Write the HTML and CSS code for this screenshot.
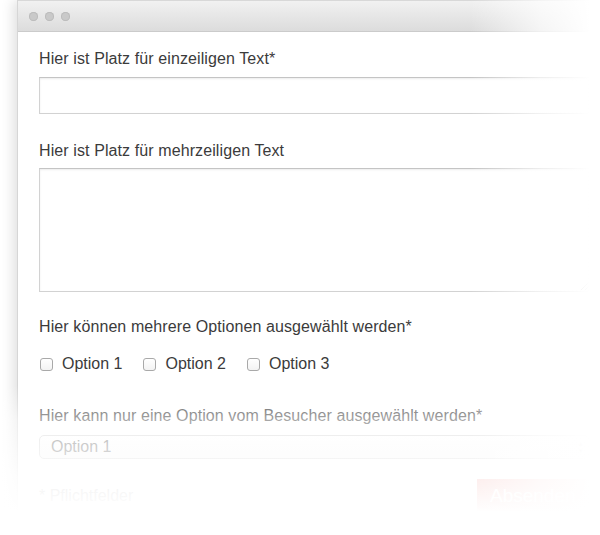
FILE: index.html
```html
<!DOCTYPE html>
<html lang="de">
<head>
<meta charset="utf-8">
<title>Formular</title>
<link rel="stylesheet" href="styles.css">
</head>
<body>
<div class="page">
  <div class="window">
    <div class="titlebar">
      <span class="dot"></span><span class="dot"></span><span class="dot"></span>
    </div>
    <form class="content">
      <label class="label">Hier ist Platz für einzeiligen Text*</label>
      <input class="field" type="text">
      <label class="label gap-lg">Hier ist Platz für mehrzeiligen Text</label>
      <textarea class="area"></textarea>
      <label class="label gap-md">Hier können mehrere Optionen ausgewählt werden*</label>
      <div class="checks">
        <span class="check"><span class="box"></span>Option 1</span>
        <span class="check"><span class="box"></span>Option 2</span>
        <span class="check"><span class="box"></span>Option 3</span>
      </div>
      <label class="label gap-xl">Hier kann nur eine Option vom Besucher ausgewählt werden*</label>
      <div class="select"><span>Option 1</span><span class="arrows">▴<br>▾</span></div>
      <div class="footer">
        <span class="note">* Pflichtfelder</span>
        <span class="button">Absenden</span>
      </div>
    </form>
  </div>
  <div class="fade"></div>
</div>
</body>
</html>
```
FILE: styles.css
```css
html, body {
  margin: 0;
  padding: 0;
  background: #fff;
}
body {
  font-family: "Liberation Sans", Arial, sans-serif;
  color: #3b3b3b;
}
.page {
  position: relative;
  width: 600px;
  height: 535px;
  overflow: hidden;
}
.window {
  margin-left: 17px;
  height: 520px;
  border-left: 1px solid #d6d6d6;
  box-shadow: -4px 0 12px rgba(0,0,0,0.12);
  background: #fff;
}
.titlebar {
  height: 30px;
  border-top: 1px solid #d8d8d8;
  border-bottom: 1px solid #cbcbcb;
  background: linear-gradient(#f1f1f1, #dcdcdc);
  display: flex;
  align-items: center;
  gap: 7px;
  padding-left: 11px;
}
.dot {
  width: 9px;
  height: 9px;
  border-radius: 50%;
  background: #c9c9c9;
  box-shadow: inset 0 0 0 1px #bcbcbc;
}
.content {
  display: flex;
  flex-direction: column;
  padding: 18px 10px 0 21px;
}
.label {
  font-size: 16px;
  line-height: 18px;
  margin-bottom: 9px;
  letter-spacing: 0.1px;
}
.gap-lg { margin-top: 28px; margin-bottom: 8px; }
.gap-md { margin-top: 26px; margin-bottom: 19px; }
.gap-xl { margin-top: 34px; margin-bottom: 10px; }
.field {
  box-sizing: border-box;
  height: 37px;
  margin: 0;
  border: 1px solid #d2d2d2;
  border-top-color: #c4c4c4;
  box-shadow: inset 0 1px 2px rgba(0,0,0,0.08);
  outline: none;
  border-radius: 0;
  background: #fff;
}
.area {
  box-sizing: border-box;
  height: 124px;
  margin: 0;
  border: 1px solid #d2d2d2;
  border-top-color: #c4c4c4;
  box-shadow: inset 0 1px 2px rgba(0,0,0,0.08);
  border-radius: 0;
  background: #fff;
  resize: both;
}
.checks {
  display: flex;
  align-items: center;
  gap: 20px;
  font-size: 16px;
  line-height: 18px;
}
.check {
  display: flex;
  align-items: center;
  gap: 9px;
}
.box {
  box-sizing: border-box;
  width: 13px;
  height: 13px;
  margin-left: 1px;
  border: 1px solid #a9a9a9;
  border-radius: 3px;
  background: linear-gradient(#fff, #f3f3f3);
}
.select {
  box-sizing: border-box;
  height: 24px;
  border: 1px solid #cfcfcf;
  border-radius: 5px;
  display: flex;
  align-items: center;
  justify-content: space-between;
  padding: 0 6px 0 11px;
  font-size: 16px;
  color: #555;
  background: linear-gradient(#fff, #f6f6f6);
}
.arrows {
  font-size: 7px;
  line-height: 7px;
  color: #777;
}
.footer {
  display: flex;
  justify-content: space-between;
  align-items: center;
  margin-top: 20px;
}
.note {
  font-size: 16px;
  color: #777;
}
.button {
  box-sizing: border-box;
  width: 119px;
  height: 33px;
  background: #e8453c;
  color: #fff;
  font-size: 19px;
  line-height: 33px;
  padding-left: 13px;
  margin-right: -6px;
}
.fade {
  position: absolute;
  inset: 0;
  pointer-events: none;
  background:
    linear-gradient(to right, rgba(255,255,255,0) 470px, rgba(255,255,255,0.7) 540px, #fff 590px),
    linear-gradient(to bottom, rgba(255,255,255,0) 385px, rgba(255,255,255,0.55) 420px, rgba(255,255,255,0.9) 478px, rgba(255,255,255,0.95) 495px, #fff 512px);
}
```
